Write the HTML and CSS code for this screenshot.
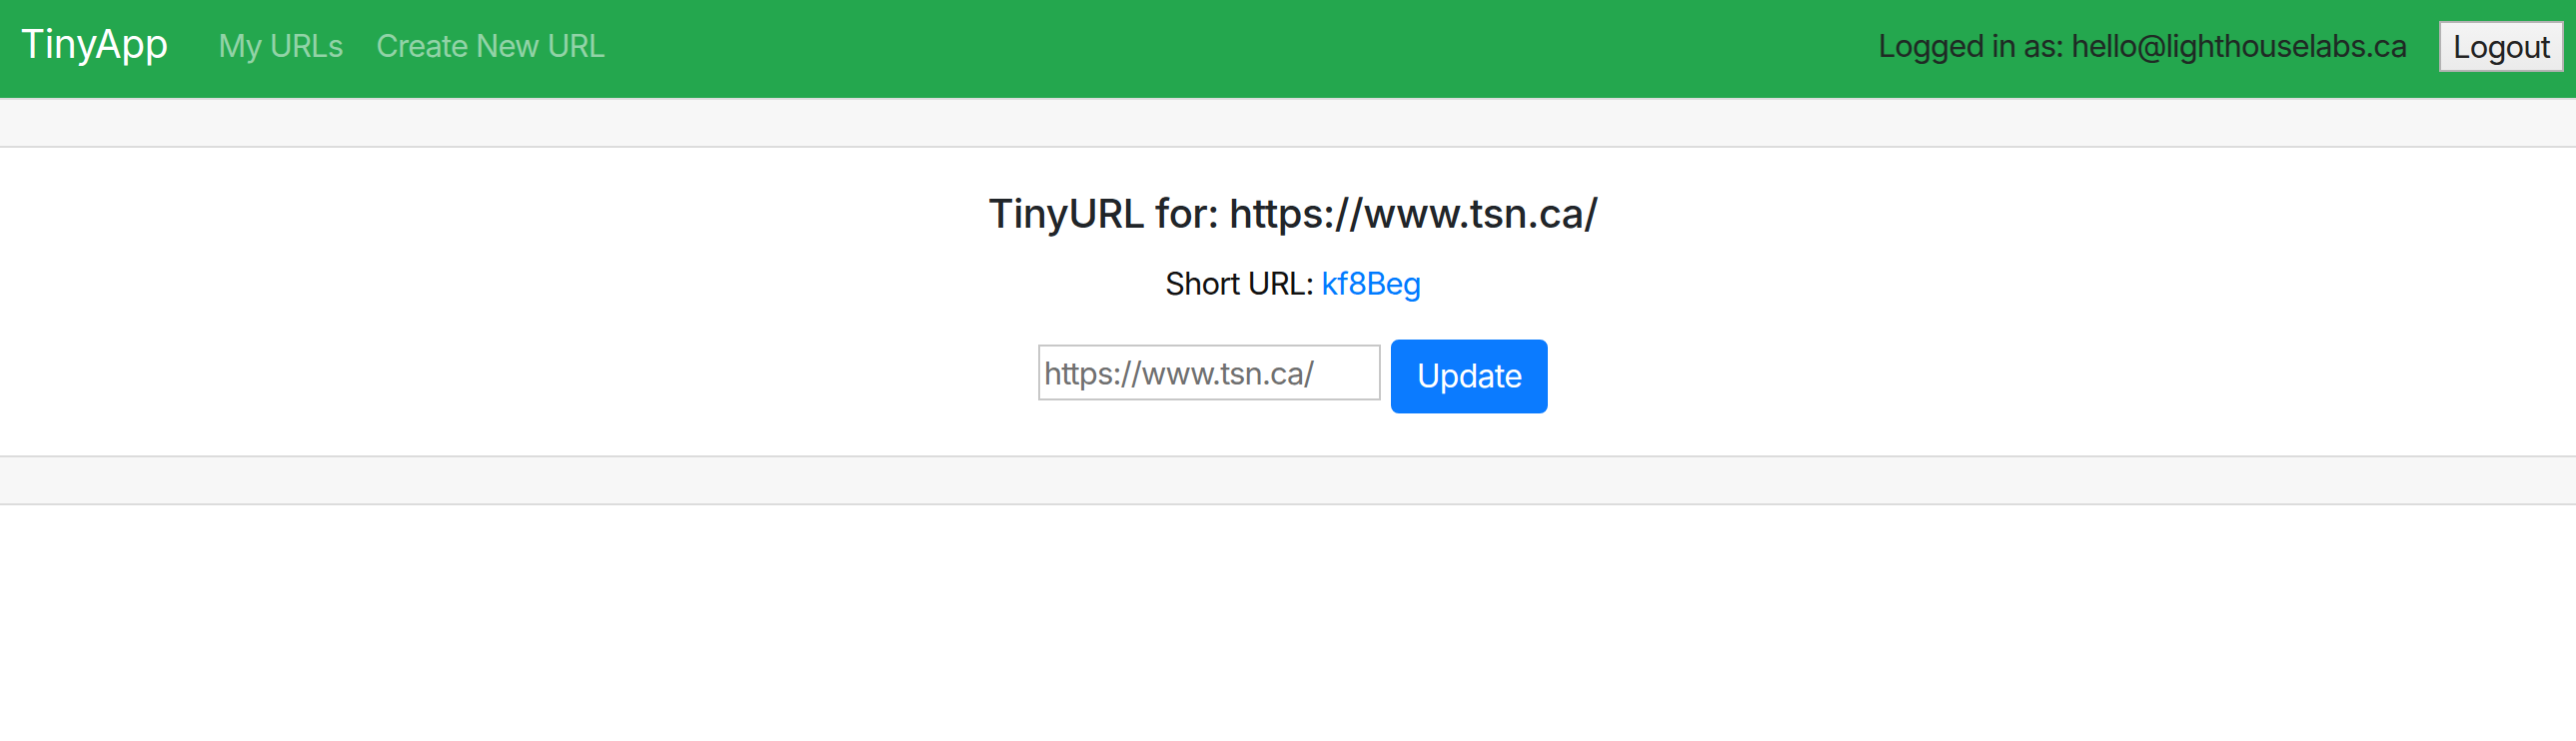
FILE: index.html
```html
<!DOCTYPE html>
<html lang="en">
<head>
<meta charset="utf-8">
<title>TinyApp</title>
<link rel="stylesheet" href="styles.css">
</head>
<body>
<nav class="navbar">
  <a class="brand" href="#">TinyApp</a>
  <div class="nav-links">
    <a class="nav-link" href="#">My URLs</a>
    <a class="nav-link" href="#">Create New URL</a>
  </div>
  <div class="nav-right">
    <span class="logged">Logged in as: hello@lighthouselabs.ca</span>
    <button class="logout" type="button">Logout</button>
  </div>
</nav>
<main class="card">
  <div class="card-header"></div>
  <div class="card-body">
    <h5 class="card-title">TinyURL for: https://www.tsn.ca/</h5>
    <p class="card-text">Short URL: <a class="short" href="#">kf8Beg</a></p>
    <form class="update-form">
      <input class="url-input" type="text" placeholder="https://www.tsn.ca/">
      <button class="btn-primary" type="button">Update</button>
    </form>
  </div>
  <div class="card-footer"></div>
</main>
</body>
</html>
```
FILE: styles.css
```css
* { box-sizing: border-box; }
html, body { margin: 0; padding: 0; background: #fff; }
body {
  font-family: Inter, "Liberation Sans", sans-serif;
  color: #212529;
  font-size: 31px;
  letter-spacing: -0.9px;
}
a { text-decoration: none; }

.navbar {
  display: flex;
  align-items: center;
  height: 98px;
  padding: 0 12px 6px 20px;
  background: #24a74e;
}
.brand {
  color: #fff;
  font-size: 39px;
  letter-spacing: -0.4px;
  line-height: 48px;
  margin-right: 50px;
  margin-bottom: 4px;
}
.nav-links { display: flex; gap: 33px; }
.nav-link {
  color: #92d3a7;
  line-height: 48px;
}
.nav-right {
  margin-left: auto;
  display: flex;
  align-items: center;
  gap: 32px;
}
.logged {
  color: #1f2a24;
  line-height: 48px;
}
.logout {
  font-family: Inter, "Liberation Sans", sans-serif;
  font-size: 31px;
  letter-spacing: -0.9px;
  color: #222;
  width: 125px;
  height: 51px;
  padding: 0;
  border: 2px solid #b3b3b3;
  background: linear-gradient(#f4f4f4, #ebebeb);
  border-radius: 0;
}

.card {
  display: block;
  border-top: 2px solid #dcdcdc;
  border-bottom: 2px solid #dcdcdc;
}
.card-header, .card-footer {
  height: 48px;
  background: #f7f7f7;
}
.card-header { border-bottom: 2px solid #dcdcdc; }
.card-footer { border-top: 2px solid #dcdcdc; }
.card-body {
  padding: 42px 40px 42px 50px;
  text-align: center;
}
.card-title {
  margin: 0 0 22px;
  font-size: 40px;
  letter-spacing: -0.5px;
  line-height: 48px;
  font-weight: 500;
  color: #212529;
}
.card-text {
  margin: 0 0 32px;
  line-height: 48px;
  color: #111;
}
.short { color: #007bff; }
.update-form {
  display: flex;
  justify-content: center;
  align-items: flex-start;
  gap: 10px;
}
.url-input {
  margin-top: 5px;
  width: 343px;
  height: 56px;
  padding: 0 4px;
  border: 2px solid #c8c8c8;
  font-family: Inter, "Liberation Sans", sans-serif;
  font-size: 31px;
  letter-spacing: -0.9px;
  color: #333;
  background: #fff;
}
.url-input::placeholder { color: #707070; }
.btn-primary {
  height: 74px;
  padding: 0 24px;
  border: 2px solid #0b7bff;
  border-radius: 8px;
  background: #0b7bff;
  color: #fff;
  font-family: Inter, "Liberation Sans", sans-serif;
  font-size: 32px;
  letter-spacing: -0.7px;
  line-height: 48px;
}
```
